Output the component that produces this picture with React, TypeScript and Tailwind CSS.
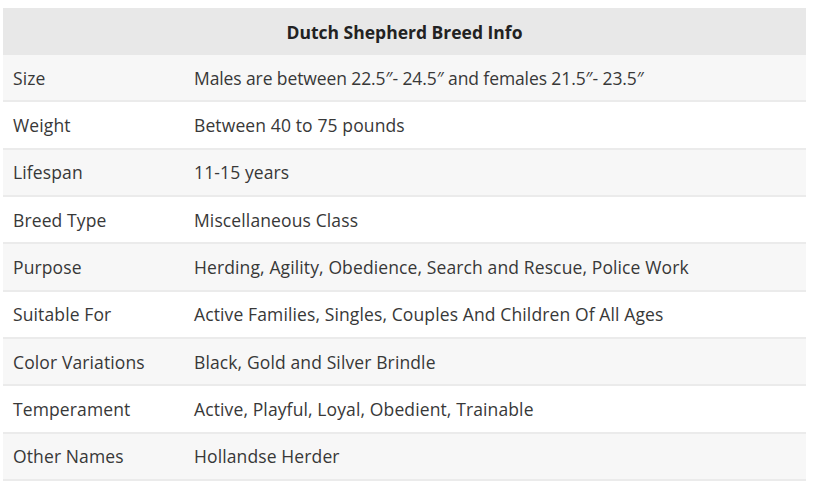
import React from "react";

const rows: [string, string][] = [
  ["Size", "Males are between 22.5\u2033- 24.5\u2033 and females 21.5\u2033- 23.5\u2033"],
  ["Weight", "Between 40 to 75 pounds"],
  ["Lifespan", "11-15 years"],
  ["Breed Type", "Miscellaneous Class"],
  ["Purpose", "Herding, Agility, Obedience, Search and Rescue, Police Work"],
  ["Suitable For", "Active Families, Singles, Couples And Children Of All Ages"],
  ["Color Variations", "Black, Gold and Silver Brindle"],
  ["Temperament", "Active, Playful, Loyal, Obedient, Trainable"],
  ["Other Names", "Hollandse Herder"],
];

export default function App() {
  return (
    <div
      className="w-[814px] h-[492px] bg-white pt-[8px] pl-[3px]"
      style={{ fontFamily: '"Open Sans", sans-serif' }}
    >
      <div className="w-[803px] text-[#383838] text-[17.5px] tracking-[0.12px]">
        <div className="h-[47px] bg-[#e8e8e8] flex items-center justify-center font-bold text-[#222] pt-[2px] tracking-[0px]">
          Dutch Shepherd Breed Info
        </div>
        {rows.map(([k, v], i) => (
          <div
            key={k}
            className={`h-[47.33px] flex items-center border-b-2 border-[#ebebeb] ${
              i % 2 === 0 ? "bg-[#f7f7f7]" : "bg-white"
            }`}
          >
            <div className="w-[191px] pl-[10px] shrink-0">{k}</div>
            <div className={i === 0 ? "tracking-[-0.1px]" : ""}>{v}</div>
          </div>
        ))}
      </div>
    </div>
  );
}
